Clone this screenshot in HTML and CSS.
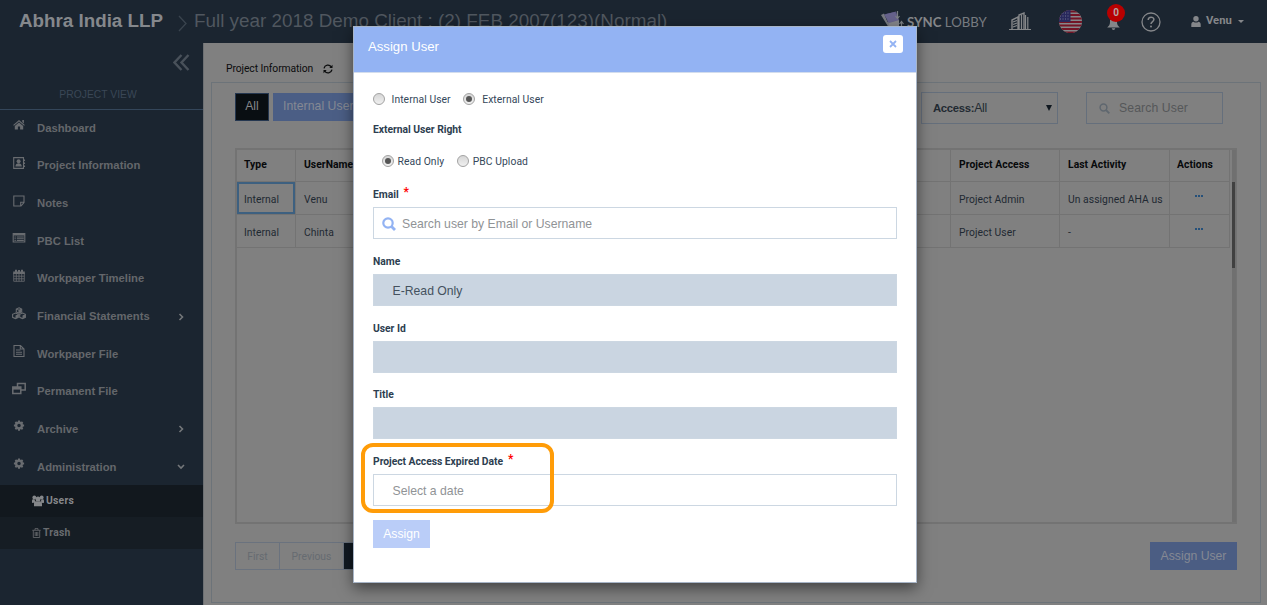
FILE: index.html
```html
<!DOCTYPE html>
<html lang="en">
<head>
<meta charset="utf-8">
<title>Assign User</title>
<link rel="stylesheet" href="styles.css">
</head>
<body>
<div class="app">
  <header class="topbar">
    <span class="brand">Abhra India LLP</span>
    <svg class="crumb" width="9" height="17" viewBox="0 0 9 17"><path d="M1 1l7 7.500-7 7.500" fill="none" stroke="#3a444e" stroke-width="1.300"/></svg>
    <span class="project">Full year 2018 Demo Client : (2) FEB 2007(123)(Normal)</span>
    <div class="tools">
      <svg class="sync-mark" width="24" height="22" viewBox="0 0 24 22"><path d="M5 4l10-2.500L18 10l-7 7-4-3z" fill="#5b5780"/><path d="M0 5l3-1.500L6.500 12l5.500 1-4 5z" fill="#777a80"/><path d="M3 4.500L14 2l3.500 8-9.500 3z" fill="#66628c"/><path d="M7.500 17.500L8 13l10-3v6l-7 4z" fill="#85868b"/><path d="M16.500 1v7m-2-2l2 2.500 2-2.500M20.500 17v-5m-2 2l2-2.500 2 2.500" fill="none" stroke="#7c8085" stroke-width="1.200"/></svg>
      <span class="sync"><b>SYNC</b> LOBBY</span>
      <svg class="building" width="22" height="19" viewBox="0 0 22 19"><path d="M0 17.500h22" stroke="#858789"/><path d="M3 17V8l6-3v12M10 17V3l5-2v16" fill="none" stroke="#858789" stroke-width="1.400"/><path d="M4 10l4-1.500M4 12.500l4-1.500M4 15l4-1.500M12.500 3v14M16.500 3v14M18.800 5v12" stroke="#858789" stroke-width="1.200"/></svg>
      <svg class="flag" width="23" height="23" viewBox="0 0 23 23"><defs><clipPath id="disc"><circle cx="11.500" cy="11.500" r="11.500"/></clipPath></defs><g clip-path="url(#disc)"><path fill="#85868a" d="M0 0h23v23H0z"/><path d="M0 1.500h23M0 5h23M0 8.500h23M0 12h23M0 15.500h23M0 19h23M0 22.500h23" stroke="#741425" stroke-width="1.900"/><path fill="#28285c" d="M0 0h11.500v12H0z"/><path d="M1 3h10M1 6h10M1 9h10" stroke="#73748e" stroke-width="1" stroke-dasharray="1 1.500"/></g></svg>
      <span class="bell"><svg width="13" height="16" viewBox="0 0 13 16"><path d="M6.500 1C3.500 1 3 4 3 7c0 2.500-1 4-2.800 5.500h12.600C11 11 10 9.500 10 7c0-3-.5-6-3.500-6zM4.800 13.300h3.400c0 2.300-3.400 2.300-3.400 0z" fill="#85878a"/></svg><i class="badge">0</i></span>
      <svg class="help" width="20" height="20" viewBox="0 0 20 20"><circle cx="10" cy="10" r="9" fill="none" stroke="#85878a" stroke-width="1.300"/><path d="M7.200 7.900c0-3.600 5.700-3.600 5.700-.3 0 2-2.900 2.100-2.900 4.500" fill="none" stroke="#85878a" stroke-width="1.500"/><circle cx="10" cy="14.600" r="1" fill="#85878a"/></svg>
      <svg class="person" width="10" height="11" viewBox="0 0 10 11"><circle cx="5" cy="2.800" r="2.700" fill="#85878a"/><path d="M.3 11V8.500c0-2 1.200-2.800 2.200-2.800 1.600 1.200 3.400 1.200 5 0 1 0 2.200.8 2.200 2.800V11z" fill="#85878a"/></svg>
      <span class="username">Venu</span>
      <span class="caret"></span>
    </div>
  </header>

  <div class="main">
    <nav class="sidebar">
      <div class="collapse"><svg width="17" height="17" viewBox="0 0 17 17"><path d="M8.500 1L1.500 8.500l7 7.500M15.500 1l-7 7.500 7 7.500" fill="none" stroke="#49515a" stroke-width="2.400"/></svg></div>
      <div class="view">PROJECT VIEW</div>
      <ul class="menu">
        <li><svg viewBox="0 0 14 14"><path d="M7 2l5.800 5-.7.800L7 3.500 1.900 7.800 1.200 7zM10.300 2h1.600v3.500l-1.600-1.400zM2.800 8L7 4.500 11.200 8v3.500H8.100V8.600H5.900v2.900H2.800z"/></svg>Dashboard</li>
        <li><svg viewBox="0 0 14 14"><path class="ln" d="M1.700 1.600h9.800v10.800H1.700zM12.500 3.500v1.500M12.500 6.500V8M12.500 9.500V11"/><circle cx="6.600" cy="5.200" r="2"/><path d="M3.400 10.500c0-4.300 6.400-4.300 6.400 0z"/></svg>Project Information</li>
        <li><svg viewBox="0 0 14 14"><path class="ln" d="M1.800 2h10.200v6.500L9 12H1.800zM12 8.300H8.700V12"/></svg>Notes</li>
        <li><svg viewBox="0 0 14 14"><path class="ln" d="M1.200 2.500h11.600v8.500H1.200z"/><path d="M1.200 2.500h11.600v2H1.200zM2.500 5.400h1.300v1.100H2.500zM4.800 5.400h7v1.100h-7zM2.500 7.200h1.300v1.100H2.500zM4.800 7.200h7v1.100h-7zM2.500 9h1.300v1.100H2.500zM4.800 9h7v1.100h-7z"/></svg>PBC List</li>
        <li><svg viewBox="0 0 14 14"><path d="M1.200 2.500h11.600V5H1.200zM3 .8h2v2.500H3zM9 .8h2v2.500H9zM6 1h2v2H6z"/><path class="thin" d="M1.700 4v8.300h10.600V4M4.300 5v7.300M7 5v7.300M9.700 5v7.300M1.700 7.200h10.600M1.700 9.800h10.600"/></svg>Workpaper Timeline</li>
        <li><svg viewBox="0 0 14 14"><path class="ln" d="M7 .8l2.700 1.200v3L7 6.200 4.300 5V2zM4.300 2L7 3.200 9.700 2M7 3.200v3M3.500 6l2.800 1.300v3l-2.800 1.300-2.900-1.300v-3zM10.500 6l2.900 1.300v3l-2.900 1.300-2.800-1.300v-3z"/><path d="M7 3.200L9.700 2v3L7 6.200zM3.500 8.600l2.800-1.300v3l-2.800 1.300zM10.500 8.600l2.900-1.300v3l-2.900 1.300z"/></svg>Financial Statements<svg class="arrow" viewBox="0 0 8 8"><path d="M2.500 1l3 3-3 3"/></svg></li>
        <li><svg viewBox="0 0 14 14"><path class="ln" d="M2 1.500h6.500L12 5v7.500H2zM8.300 1.500V5H12"/><path class="ln" d="M4 6h4.500M4 8.200h6M4 10.300h6"/></svg>Workpaper File</li>
        <li><svg viewBox="0 0 14 14"><path class="ln bold" d="M5.500 4.500V1.600h7.700v6.300H9.500M.8 5h8v6.500h-8z"/><path d="M.8 5h8v2.600h-8z"/></svg>Permanent File</li>
        <li><svg viewBox="0 0 14 14"><circle class="gear" cx="7" cy="6.600" r="2.900"/><path class="teeth" d="M7 1.500v2M7 9.700v2M1.900 6.600h2M10.100 6.600h2M3.400 3l1.300 1.300M9.300 8.900l1.300 1.300M3.400 10.200l1.300-1.300M9.300 4.300l1.300-1.300"/></svg>Archive<svg class="arrow" viewBox="0 0 8 8"><path d="M2.500 1l3 3-3 3"/></svg></li>
        <li><svg viewBox="0 0 14 14"><circle class="gear" cx="7" cy="6.600" r="2.900"/><path class="teeth" d="M7 1.500v2M7 9.700v2M1.900 6.600h2M10.100 6.600h2M3.400 3l1.300 1.300M9.300 8.900l1.300 1.300M3.400 10.200l1.300-1.300M9.300 4.300l1.300-1.300"/></svg>Administration<svg class="arrow" viewBox="0 0 8 8"><path d="M1 2l3 3 3-3"/></svg></li>
      </ul>
      <div class="sub current"><svg width="12" height="12" viewBox="0 0 12 12"><circle cx="2.300" cy="2.500" r="1.900"/><circle cx="9.700" cy="2.500" r="1.900"/><circle cx="6" cy="4" r="2.500"/><path d="M0 8V6c0-2 1-2 2.500-1.500L3.500 7zM12 8V6c0-2-1-2-2.500-1.500L8.500 7zM2 11.300V9c0-3 2-3 4-2.500 2-.5 4-.5 4 2.500v2.300z"/></svg>Users</div>
      <div class="sub"><svg width="9" height="10" viewBox="0 0 9 10"><path class="thin" d="M.3 2.300h8.400M1.300 2.500v7h6.400v-7M3 2V.6h3V2M3.200 4v4M4.500 4v4M5.800 4v4"/></svg>Trash</div>
    </nav>

    <section class="content">
      <div class="heading">Project Information
        <svg width="10" height="10" viewBox="0 0 10 10"><path d="M1 4.300A4 4 0 0 1 8.300 3M9 5.700A4 4 0 0 1 1.700 7" fill="none" stroke="#0b0c0d" stroke-width="1.300"/><path d="M9.500.8v3.200H6.300zM.5 9.200V6h3.200z" fill="#0b0c0d"/></svg>
      </div>
      <div class="panel">
        <div class="filters">
          <span class="tab on">All</span><span class="tab">Internal User</span>
          <div class="select"><b>Access:</b>All<i class="down"></i></div>
          <div class="search"><svg width="11" height="11" viewBox="0 0 11 11"><circle cx="4.500" cy="4.500" r="3.400" fill="none" stroke="#5f676f" stroke-width="1.500"/><path d="M7 7l3.300 3.300" stroke="#5f676f" stroke-width="1.800"/></svg>Search User</div>
        </div>
        <div class="table">
          <div class="grid">
            <div class="row head"><span>Type</span><span>UserName</span><span>Project Access</span><span>Last Activity</span><span>Actions</span></div>
            <div class="row"><span class="focus">Internal</span><span>Venu</span><span>Project Admin</span><span>Un assigned AHA us</span><span class="dots"><i></i><i></i><i></i></span></div>
            <div class="row"><span>Internal</span><span>Chinta</span><span>Project User</span><span>-</span><span class="dots"><i></i><i></i><i></i></span></div>
          </div>
          <div class="scroll"><div class="thumb"></div></div>
        </div>
        <div class="foot">
          <div class="pager"><span>First</span><span class="prev">Previous</span><span class="page"></span></div>
          <span class="assign-user">Assign User</span>
        </div>
      </div>
    </section>
  </div>
</div>

<div class="modal">
  <div class="modal-head"><span>Assign User</span><span class="close"><svg width="8" height="8" viewBox="0 0 8 8"><path d="M1 1l6 6M7 1L1 7" stroke="#93b3f3" stroke-width="1.800"/></svg></span></div>
  <div class="modal-body">
    <div class="radios"><i class="radio"></i><span>Internal User</span><i class="radio checked"></i><span>External User</span></div>
    <div class="label right-label">External User Right</div>
    <div class="radios rights"><i class="radio checked"></i><span>Read Only</span><i class="radio"></i><span>PBC Upload</span></div>
    <div class="field"><div class="label">Email<em>*</em></div><div class="input with-icon"><svg width="14" height="14" viewBox="0 0 14 14"><circle cx="6" cy="6" r="4.700" fill="none" stroke="#93b3f3" stroke-width="2.200"/><path d="M9.300 9.300l3.700 3.700" stroke="#93b3f3" stroke-width="2.800"/></svg>Search user by Email or Username</div></div>
    <div class="field"><div class="label">Name</div><div class="input filled">E-Read Only</div></div>
    <div class="field"><div class="label">User Id</div><div class="input filled"></div></div>
    <div class="field"><div class="label">Title</div><div class="input filled"></div></div>
    <div class="field"><div class="label">Project Access Expired Date<em>*</em></div><div class="input">Select a date</div></div>
    <span class="assign">Assign</span>
  </div>
  <div class="callout"></div>
</div>
</body>
</html>
```
FILE: styles.css
```css
* { box-sizing: border-box; }
body { margin: 0; width: 1267px; height: 605px; overflow: hidden; background: #808080; font-family: "Liberation Sans", Arial, sans-serif; font-size: 12.22px; }
svg { display: block; flex: none; }
i { font-style: normal; }
.app { height: 605px; display: flex; flex-direction: column; }

.topbar { height: 43px; flex: none; display: flex; align-items: center; background: #1b2530; padding-left: 19px; white-space: nowrap; }
.brand { font-size: 18.8px; font-weight: bold; color: #85888c; width: 159px; line-height: 40px; padding-bottom: 2px; }
.crumb { margin-top: 3px; }
.project { margin-left: 7px; font-size: 18.85px; color: #50575f; width: 473px; line-height: 40px; padding-bottom: 2px; }
.tools { margin-left: auto; height: 43px; display: flex; align-items: center; color: #85878a; width: 386px; }
.sync-mark { margin-top: -2px; }
.sync { font-family: Lato, sans-serif; font-size: 13.2px; margin-left: 2px; width: 81px; color: #777b80; }
.sync b { color: #85878a; }
.building { margin-left: 21px; }
.flag { margin-left: 28px; margin-top: -1px; }
.bell { position: relative; margin-left: 25px; margin-top: 2px; }
.badge { position: absolute; left: 0; top: -11px; width: 18px; height: 18px; border-radius: 50%; background: #b80000; color: #b4a4a4; font: bold 10px/18px Roboto, sans-serif; text-align: center; }
.help { margin-left: 21px; }
.person { margin-left: 30px; }
.username { font: bold 11.28px/20px Roboto, sans-serif; margin-left: 5px; width: 32px; margin-top: -2px; }
.caret { border: 3.5px solid transparent; border-top-color: #85878a; border-bottom: 0; }

.main { flex: 1; display: flex; min-height: 0; }
.sidebar { width: 203px; flex: none; background: #1b2530; }
.collapse { height: 38px; padding: 11px 0 0 173px; }
.view { height: 29px; line-height: 27px; text-align: center; font-size: 10.34px; color: #3a4756; border-bottom: 1px solid #34465a; padding-right: 7px; }
.menu { margin: -1px 0 0; padding: 0; list-style: none; }
.menu li { height: 37.65px; display: flex; align-items: center; padding: 0 18px 0 12px; font-size: 11.28px; font-weight: bold; color: #64676b; }
.menu svg { width: 14px; height: 14px; margin: -5px 11px 0 0; fill: #696c70; }
.menu .ln { fill: none; stroke: #696c70; stroke-width: 1.1; }
.menu .ln.bold { stroke-width: 1.5; }
.thin { fill: none; stroke: #696c70; stroke-width: .8; }
.gear { fill: none; stroke: #696c70; stroke-width: 2.3; }
.teeth { stroke: #696c70; stroke-width: 2; }
.menu .arrow { width: 8px; height: 8px; margin: 1px 0 0 auto; fill: none; stroke: #74777a; stroke-width: 1.6; }
.sub { height: 32px; display: flex; align-items: center; gap: 2px; padding-left: 32px; background: #161d24; color: #696c70; font: bold 10.34px/32px Roboto, sans-serif; letter-spacing: .25px; }
.sub.current { background: #12181e; color: #85878a; }
.sub svg { fill: #85878a; }

.content { flex: 1; border-left: 1px solid #6d7073; padding: 0 6px 2px 7px; background: #808080; }
.heading { height: 39px; padding: 12px 0 0 15px; display: flex; align-items: center; gap: 10px; font: 10.34px/12px Roboto, sans-serif; color: #0b0c0d; letter-spacing: -.08px; }
.panel { height: 521px; border: 1px solid #6c7379; padding: 9px 23px 0 23px; }
.filters { display: flex; height: 56px; align-items: flex-start; }
.tab { height: 28px; line-height: 25px; padding: 0 9px; background: #4b5e85; border: 1px solid #4b5e85; color: #858993; margin: 1px 4px 0 0; width: 120px; white-space: nowrap; letter-spacing: .05px; }
.tab.on { width: 34px; padding: 0; text-align: center; background: #090e12; border-color: #253750; color: #85878a; }
.select, .search { height: 32px; width: 137px; border: 1px solid #656f7c; display: flex; align-items: center; }
.select { margin-left: auto; margin-right: 28px; padding: 0 5px 0 11px; color: #222a32; letter-spacing: -.3px; }
.select b { font-size: 11.28px; }
.down { margin-left: auto; border: 3px solid transparent; border-top: 6px solid #101820; border-bottom: 0; }
.search { padding-left: 12px; gap: 9px; color: #555759; letter-spacing: .1px; margin-right: 14px; }
.table { height: 376px; border: 2px solid #737373; border-right-width: 1px; display: flex; justify-content: space-between; font: 10.34px/14px Roboto, sans-serif; color: #1f2932; }
.grid { width: 993px; }
.row { display: grid; grid-template-columns: 59px 655px 109px 110px 60px; height: 33px; border-bottom: 1px solid #737373; }
.row > span { border-right: 1px solid #737373; padding: 11px 0 0 8px; white-space: nowrap; overflow: hidden; letter-spacing: .05px; }
.row > span:first-child { padding-left: 7px; }
.row.head { height: 32px; font-weight: bold; color: #07090b; }
.row.head > span { padding-top: 8px; }
.row.head > span:last-child { padding-left: 7px; }
.row > .focus { box-shadow: inset 0 0 0 2px #3d6080; }
.row > .dots { display: flex; gap: 1px; justify-content: center; padding: 13px 2px 0 0; }
.dots i { width: 2px; height: 2px; background: #25507a; }
.scroll { width: 4px; background: #707070; padding-top: 32px; }
.thumb { width: 3px; height: 86px; background: #404040; }
.foot { display: flex; justify-content: space-between; padding-top: 18px; }
.pager { display: flex; border: 1px solid #6a727e; height: 28px; font: 10.34px/27px Roboto, sans-serif; color: #666b71; }
.pager span { width: 44px; text-align: center; border-right: 1px solid #6a727e; }
.pager .prev { width: 64px; }
.pager .page { width: 28px; background: #111922; border: 0; }
.assign-user { background: #4b5d83; color: #858993; height: 28px; line-height: 28px; width: 87px; text-align: center; }

.modal { position: absolute; left: 353px; top: 26px; width: 564px; height: 557px; border: 1px solid #a8b5c7; background: #fff; box-shadow: 0 5px 14px rgba(0,0,0,.5); }
.modal-head { height: 46px; background: #93b3f3; border-bottom: 1px solid #d3dded; display: flex; justify-content: space-between; padding: 8px 13px 0 14px; color: #fff; font-size: 13.16px; line-height: 24px; }
.close { width: 20px; height: 18px; border-radius: 3px; background: #fff; display: flex; align-items: center; justify-content: center; }
.modal-body { padding: 16px 19px; }
.radios { height: 20px; display: flex; align-items: center; font: 10.34px/20px Roboto, sans-serif; color: #34475a; letter-spacing: .07px; }
.radios span { margin: 2px 13px 0 7px; }
.rights { padding-left: 9px; margin: 12px 0 10px; }
.rights span { margin-left: 4px; }
.radio { width: 12px; height: 12px; margin-left: -.5px; border-radius: 50%; border: 1px solid #a2a2a2; background: linear-gradient(#d6d6d6, #f0f0f0); display: flex; align-items: center; justify-content: center; }
.checked::after { content: ""; width: 6px; height: 6px; border-radius: 50%; background: #555; }
.label { font: bold 10.34px/28px Roboto, sans-serif; color: #2d3e50; height: 26px; letter-spacing: -.03px; }
.label.right-label { margin-top: 10px; height: 20px; line-height: 22px; }
.label em { font-style: normal; color: #f00; font-size: 12px; line-height: 10px; margin-left: 5px; position: relative; top: -2px; }
.field { margin-bottom: 8.75px; }
.input { height: 32px; border: 1px solid #ccd7e2; padding-left: 18.5px; line-height: 32px; color: #909396; }
.input.with-icon { display: flex; align-items: center; padding: 1px 0 0 8px; gap: 6px; }
.input.filled { background: #cad5e1; color: #44515e; }
.assign { display: block; margin-top: 14px; width: 57px; height: 28px; background: #bacdf8; color: #fff; line-height: 28px; text-align: center; }
.callout { position: absolute; left: 7px; top: 416px; width: 193px; height: 70px; border: 4px solid #ff9c08; border-radius: 12px; }
```
